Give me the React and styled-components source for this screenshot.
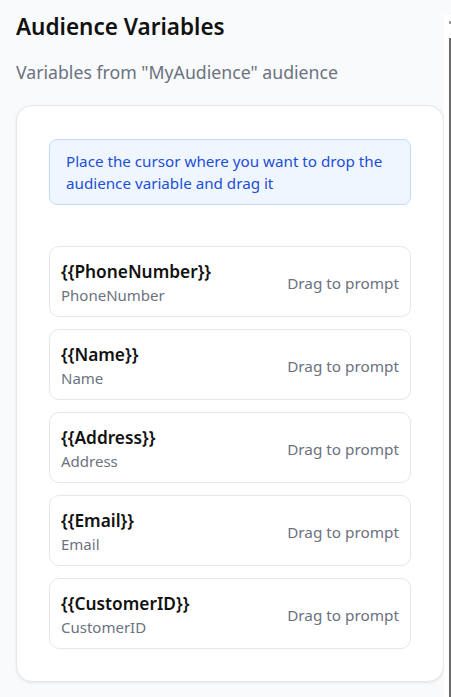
import React from 'react';
import styled, { createGlobalStyle } from 'styled-components';

const GlobalStyle = createGlobalStyle`
  html, body {
    margin: 0;
    padding: 0;
    background: #f9fafb;
  }
  body {
    font-family: "Noto Sans", "Open Sans", sans-serif;
    -webkit-font-smoothing: antialiased;
  }
`;

const Page = styled.div`
  display: grid;
  grid-template-columns: 444px 1fr;
  min-height: 697px;
  background: #f9fafb;
`;

const Panel = styled.div`
  padding: 13px 0 15px 16px;
`;

const Title = styled.h2`
  margin: 0;
  font-size: 22.5px;
  line-height: 28px;
  font-weight: 600;
  color: #111111;
`;

const Subtitle = styled.p`
  margin: 19px 0 21px;
  font-size: 17.7px;
  line-height: 24px;
  color: #6b7280;
`;

const Card = styled.div`
  background: #ffffff;
  border: 1px solid #e5e7eb;
  border-radius: 16px;
  box-shadow: 0 1px 3px rgba(0, 0, 0, 0.08);
  padding: 33px 32px 32px;
`;

const Info = styled.div`
  background: #eff6ff;
  border: 1px solid #bfdbfe;
  border-radius: 8px;
  padding: 10px 16px;
  color: #1d4ed8;
  font-size: 15.2px;
  line-height: 22px;
  margin-bottom: 41px;
`;

const List = styled.div`
  display: flex;
  flex-direction: column;
  gap: 12px;
`;

const Item = styled.div`
  display: flex;
  align-items: center;
  justify-content: space-between;
  border: 1px solid #e5e7eb;
  border-radius: 10px;
  padding: 13px 11px 10px;
  background: #ffffff;
  cursor: grab;
`;

const Labels = styled.div`
  display: flex;
  flex-direction: column;
`;

const VarName = styled.span`
  font-size: 17.3px;
  line-height: 24px;
  font-weight: 600;
  color: #111111;
`;

const VarLabel = styled.span`
  font-size: 15px;
  line-height: 22px;
  color: #6b7280;
`;

const Hint = styled.span`
  font-size: 15.3px;
  color: #6b7280;
`;

const Side = styled.div`
  position: relative;
  background: #ffffff;
  margin-top: 15px;
`;

const Rail = styled.div`
  position: absolute;
  right: 0;
  top: 23px;
  bottom: 0;
  width: 2px;
  background: #6b6b6b;

  &::before {
    content: '';
    position: absolute;
    top: -17px;
    left: 0;
    width: 2px;
    height: 3px;
    border-radius: 1px;
    background: #8a8a8a;
  }
`;

const variables = ['PhoneNumber', 'Name', 'Address', 'Email', 'CustomerID'];

const App = () => {
  return (
    <>
      <GlobalStyle />
      <Page>
        <Panel>
          <Title>Audience Variables</Title>
          <Subtitle>Variables from "MyAudience" audience</Subtitle>
          <Card>
            <Info>
              Place the cursor where you want to drop the audience variable and drag it
            </Info>
            <List>
              {variables.map((v) => (
                <Item key={v} draggable>
                  <Labels>
                    <VarName>{`{{${v}}}`}</VarName>
                    <VarLabel>{v}</VarLabel>
                  </Labels>
                  <Hint>Drag to prompt</Hint>
                </Item>
              ))}
            </List>
          </Card>
        </Panel>
        <Side>
          <Rail />
        </Side>
      </Page>
    </>
  );
};

export default App;
